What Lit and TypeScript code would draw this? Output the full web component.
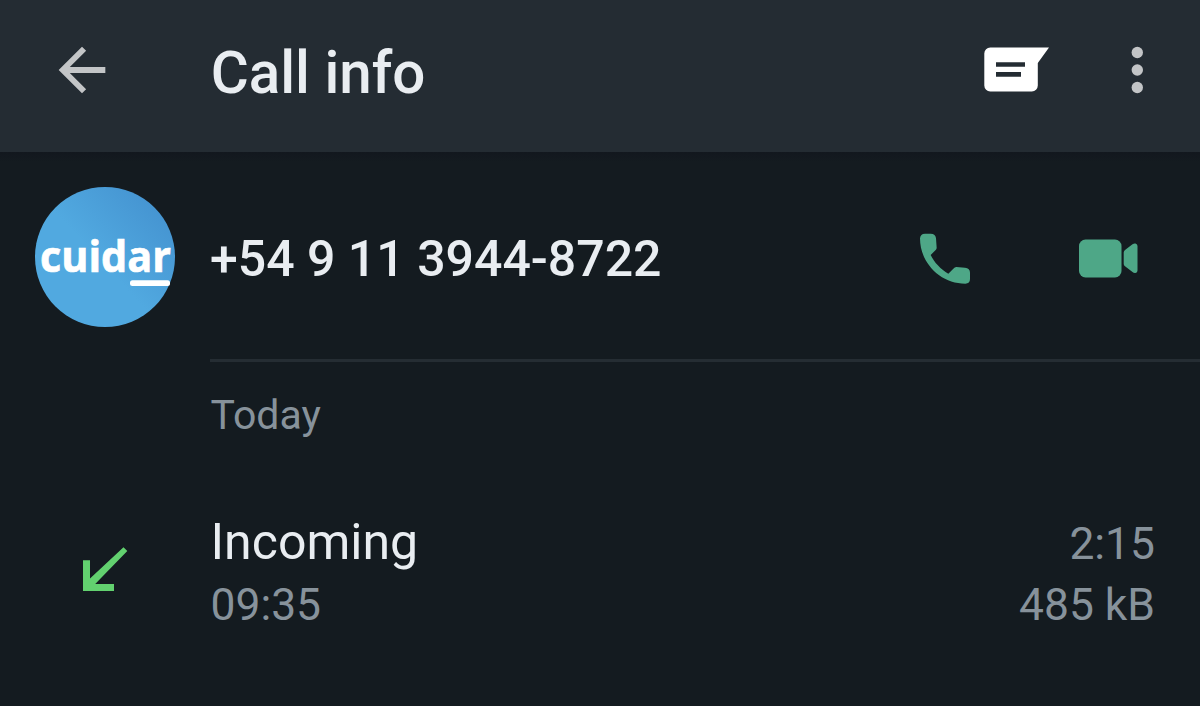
import { LitElement, css, html, svg } from 'lit'
import { customElement, property } from 'lit/decorators.js'

interface CallEntry {
  kind: string
  time: string
  duration: string
  size: string
}

const backIcon = svg`<path d="M20 11H7.83l5.59-5.59L12 4l-8 8 8 8 1.41-1.41L7.83 13H20v-2z"></path>`

@customElement('call-toolbar')
export class CallToolbar extends LitElement {
  @property() heading = ''

  render() {
    return html`
      <header class="toolbar">
        <svg class="back" width="70" height="70" viewBox="0 0 24 24">${backIcon}</svg>
        <h1 class="title">${this.heading}</h1>
        <svg class="message" width="66" height="46" viewBox="0 0 66 46">
          <path
            fill-rule="evenodd"
            d="M6.300 0.500H65L53.800 16V38.500a6 6 0 0 1-6 6H6.300a6 6 0 0 1-6-6V6.500a6 6 0 0 1 6-6ZM12 15.200v4.600h29v-4.600ZM12 25.100v4.600h25v-4.600Z"
          ></path>
        </svg>
        <svg class="more" width="12" height="48" viewBox="0 0 12 48">
          <circle cx="6.3" cy="6.5" r="5.7"></circle>
          <circle cx="6.3" cy="24" r="5.7"></circle>
          <circle cx="6.3" cy="41.5" r="5.7"></circle>
        </svg>
      </header>
    `
  }

  static styles = css`
    :host {
      display: block;
    }

    .toolbar {
      display: flex;
      align-items: center;
      box-sizing: border-box;
      height: 152px;
      padding: 0 57px 12px 47px;
      background: #242c33;
    }

    .title {
      flex: 1;
      margin: 0;
      padding: 6px 0 0 93.7px;
      color: #e9edf1;
      font-size: 58.3px;
      font-weight: 500;
      line-height: 70px;
      white-space: nowrap;
    }

    svg {
      display: block;
      flex: none;
    }

    .back,
    .more {
      fill: #c3c5c7;
    }

    .message {
      margin-right: 81px;
      fill: #fff;
    }
  `
}

@customElement('call-contact')
export class CallContact extends LitElement {
  @property() number = ''

  render() {
    return html`
      <section class="contact">
        <svg class="avatar" width="140" height="140" viewBox="0 0 140 140">
          <defs>
            <linearGradient id="sky" x1="0.2" y1="0.8" x2="0.9" y2="0.15">
              <stop offset="0.4" stop-color="#51a9e0"></stop>
              <stop offset="1" stop-color="#4594d1"></stop>
            </linearGradient>
          </defs>
          <circle cx="70" cy="70" r="70" fill="url(#sky)"></circle>
          <text class="brand" x="5" y="84.5" textLength="131" lengthAdjust="spacingAndGlyphs">cuidar</text>
          <rect x="95" y="93.3" width="40" height="5.6" rx="2.5" fill="#fff"></rect>
        </svg>
        <div class="details">
          <span class="number">${this.number}</span>
          <svg class="action phone" width="52" height="52" viewBox="56 38 156 156">
            <path
              d="M74 40H91Q106 40 107 54L109 82Q109 86 106 89L91 104C102 127 122 147 144 160L159 145Q163 140 168 140L194 142Q209 144 209 157V176Q209 190 195 190C120 190 59 128 59 54Q60 40 74 40Z"
            ></path>
          </svg>
          <svg class="action" width="60" height="40" viewBox="0 0 60 40">
            <rect x="1" y="0.5" width="42.5" height="38" rx="6.5"></rect>
            <path
              d="M45.700 13.500Q45.700 12 47 11L54.500 5.200Q56 4.200 57.500 4.500Q59.500 5 59.500 7V31.500Q59.500 33.500 57.500 34Q56 34.300 54.500 33.100L47 27.200Q45.700 26.200 45.700 24.700Z"
            ></path>
          </svg>
        </div>
      </section>
    `
  }

  static styles = css`
    :host {
      display: block;
    }

    .contact {
      display: flex;
      height: 210px;
    }

    svg {
      display: block;
      flex: none;
    }

    .avatar {
      margin: 35px 35px 0;
    }

    .brand {
      fill: #fff;
      stroke: #fff;
      stroke-width: 0.7px;
      font-family: 'Open Sans', 'Noto Sans', sans-serif;
      font-size: 43px;
      font-weight: 700;
    }

    .details {
      flex: 1;
      display: flex;
      align-items: center;
      padding: 6px 62px 0 0;
      border-bottom: 3px solid #252d33;
    }

    .number {
      flex: 1;
      color: #e9edf1;
      font-size: 50px;
      font-weight: 500;
      line-height: 60px;
      white-space: nowrap;
    }

    .action {
      fill: #4ea787;
    }

    .phone {
      margin-right: 107px;
    }
  `
}

@customElement('call-log-item')
export class CallLogItem extends LitElement {
  @property({ attribute: false }) entry!: CallEntry

  render() {
    return html`
      <article class="item">
        <svg class="direction" width="46" height="46" viewBox="0 0 46 46">
          <path d="M1 14.300H8V32.500L41.500 1.200L45.300 5.100L13.200 38H32V45H1Z"></path>
        </svg>
        <div class="column">
          <span class="kind">${this.entry.kind}</span>
          <span class="meta">${this.entry.time}</span>
        </div>
        <div class="column end">
          <span class="meta duration">${this.entry.duration}</span>
          <span class="meta">${this.entry.size}</span>
        </div>
      </article>
    `
  }

  static styles = css`
    :host {
      display: block;
    }

    .item {
      display: grid;
      grid-template-columns: 210.5px 1fr auto;
      padding-right: 45px;
    }

    .direction {
      display: block;
      margin: 35px 0 0 82px;
      fill: #62d16f;
    }

    .column {
      display: flex;
      flex-direction: column;
      white-space: nowrap;
    }

    .end {
      text-align: right;
    }

    .kind {
      color: #e9edf1;
      font-size: 50px;
      line-height: 62px;
    }

    .meta {
      color: #87929b;
      font-size: 44.4px;
      line-height: 64px;
    }

    .duration {
      padding-top: 4px;
      line-height: 58px;
    }
  `
}

@customElement('app-root')
export class AppRoot extends LitElement {
  private _calls: CallEntry[] = [
    { kind: 'Incoming', time: '09:35', duration: '2:15', size: '485 kB' },
  ]

  render() {
    return html`
      <call-toolbar heading="Call info"></call-toolbar>
      <main class="content">
        <call-contact number="+54 9 11 3944-8722"></call-contact>
        <h2 class="day">Today</h2>
        ${this._calls.map((entry) => html`<call-log-item .entry=${entry}></call-log-item>`)}
      </main>
    `
  }

  static styles = css`
    :host {
      display: flex;
      flex-direction: column;
      height: 706px;
      overflow: hidden;
      background: #141b20;
      font-family: Roboto, 'Liberation Sans', sans-serif;
    }

    .content {
      flex: 1;
      background: linear-gradient(#12171e, #141b20 10px);
    }

    .day {
      margin: 0;
      padding: 28px 0 71px 210.5px;
      color: #87929b;
      font-size: 41px;
      font-weight: 400;
      line-height: 50px;
    }
  `
}

declare global {
  interface HTMLElementTagNameMap {
    'app-root': AppRoot
    'call-toolbar': CallToolbar
    'call-contact': CallContact
    'call-log-item': CallLogItem
  }
}
